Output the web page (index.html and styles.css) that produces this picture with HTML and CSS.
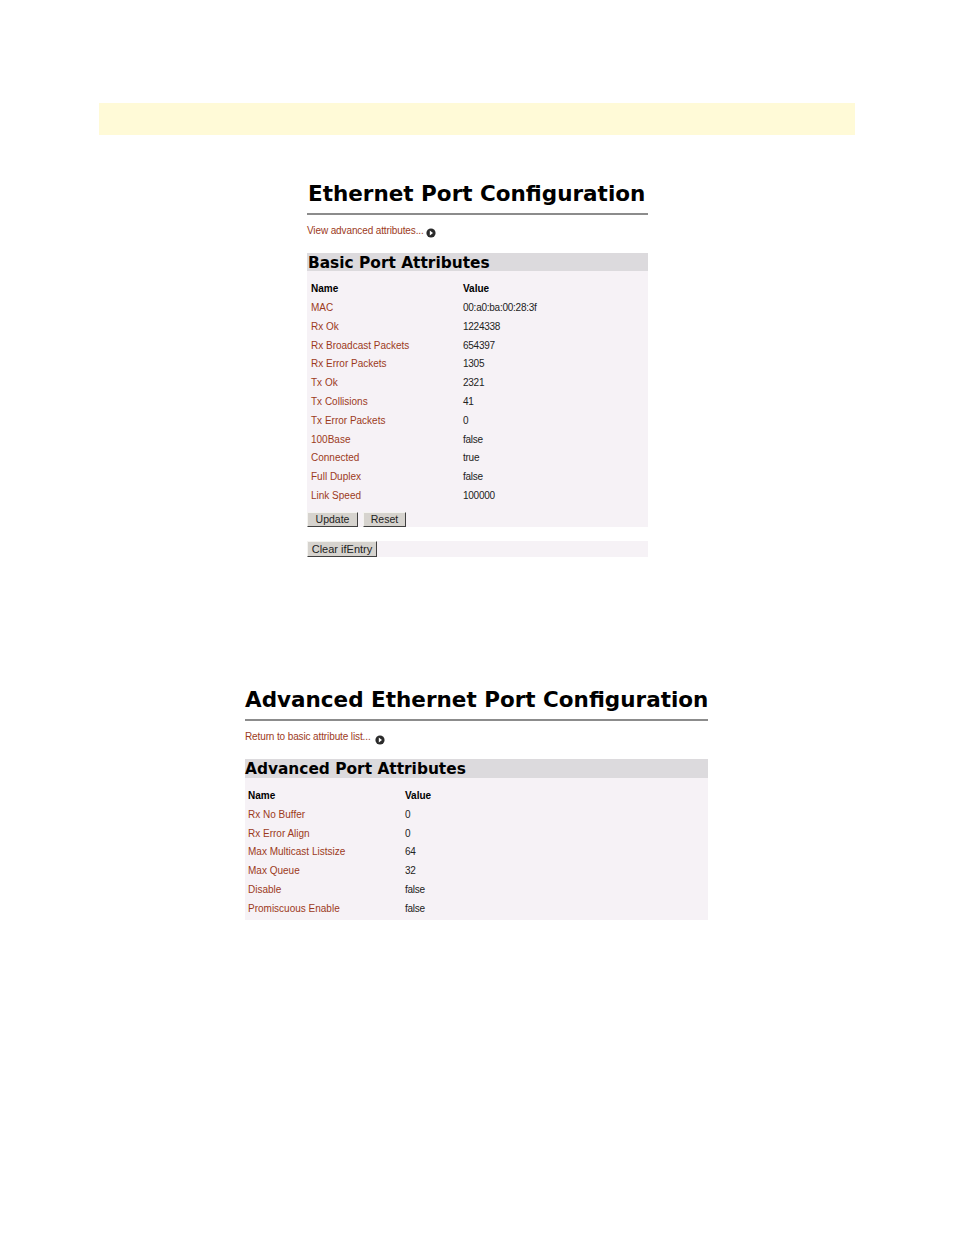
FILE: index.html
```html
<!DOCTYPE html>
<html lang="en">
<head>
    <meta charset="UTF-8">
    <title>Ethernet Port Configuration</title>
    <link rel="stylesheet" href="styles.css">
</head>
<body>
    <div class="note-bar"></div>

    <section class="panel panel-basic">
        <h1>Ethernet Port Configuration</h1>
        <p class="more"><a href="#">View advanced attributes...</a>
            <svg class="arrow" viewBox="0 0 10 10"><circle cx="5" cy="5" r="4.6" fill="#2b2b2b"/><path d="M3.8 2.6 7 5 3.8 7.4z" fill="#fff"/></svg>
        </p>
        <h2>Basic Port Attributes</h2>
        <div class="attrs">
            <table>
                <tr><th>Name</th><th>Value</th></tr>
                <tr><td><a href="#">MAC</a></td><td>00:a0:ba:00:28:3f</td></tr>
                <tr><td><a href="#">Rx Ok</a></td><td>1224338</td></tr>
                <tr><td><a href="#">Rx Broadcast Packets</a></td><td>654397</td></tr>
                <tr><td><a href="#">Rx Error Packets</a></td><td>1305</td></tr>
                <tr><td><a href="#">Tx Ok</a></td><td>2321</td></tr>
                <tr><td><a href="#">Tx Collisions</a></td><td>41</td></tr>
                <tr><td><a href="#">Tx Error Packets</a></td><td>0</td></tr>
                <tr><td><a href="#">100Base</a></td><td>false</td></tr>
                <tr><td><a href="#">Connected</a></td><td>true</td></tr>
                <tr><td><a href="#">Full Duplex</a></td><td>false</td></tr>
                <tr><td><a href="#">Link Speed</a></td><td>100000</td></tr>
            </table>
            <div class="buttons">
                <button class="btn-update">Update</button>
                <button class="btn-reset">Reset</button>
            </div>
        </div>
        <div class="clear-row"><button class="btn-clear">Clear ifEntry</button></div>
    </section>

    <section class="panel panel-advanced">
        <h1>Advanced Ethernet Port Configuration</h1>
        <p class="more"><a href="#">Return to basic attribute list...</a>
            <svg class="arrow" viewBox="0 0 10 10"><circle cx="5" cy="5" r="4.6" fill="#2b2b2b"/><path d="M3.8 2.6 7 5 3.8 7.4z" fill="#fff"/></svg>
        </p>
        <h2>Advanced Port Attributes</h2>
        <div class="attrs">
            <table>
                <tr><th>Name</th><th>Value</th></tr>
                <tr><td><a href="#">Rx No Buffer</a></td><td>0</td></tr>
                <tr><td><a href="#">Rx Error Align</a></td><td>0</td></tr>
                <tr><td><a href="#">Max Multicast Listsize</a></td><td>64</td></tr>
                <tr><td><a href="#">Max Queue</a></td><td>32</td></tr>
                <tr><td><a href="#">Disable</a></td><td>false</td></tr>
                <tr><td><a href="#">Promiscuous Enable</a></td><td>false</td></tr>
            </table>
        </div>
    </section>
</body>
</html>
```

FILE: styles.css
```css
body {
    margin: 0;
    padding-top: 103px;
    background: #fff;
    font-family: "Liberation Sans", Arial, sans-serif;
    color: #222;
}

a {
    color: #9c3a1c;
    text-decoration: none;
}

.note-bar {
    height: 32px;
    margin: 0 99px;
    background: #fffad7;
}

.panel-basic {
    width: 341px;
    margin: 44px 0 0 307px;
}

.panel-advanced {
    width: 463px;
    margin: 128px 0 0 245px;
}

h1 {
    margin: 0;
    padding-bottom: 5px;
    border-bottom: 2px solid #8c8c8c;
    font-family: "DejaVu Sans", Verdana, sans-serif;
    font-size: 21.5px;
    line-height: 29px;
    font-weight: bold;
    color: #000;
    white-space: nowrap;
}

.panel-basic h1,
.panel-basic h2 {
    padding-left: 1px;
}

.more {
    margin: 0;
    height: 38px;
    padding-top: 9px;
    box-sizing: border-box;
    font-size: 10px;
    letter-spacing: -0.12px;
    line-height: 14px;
}

.arrow {
    width: 10px;
    height: 10px;
    vertical-align: -4px;
}

.panel-advanced .arrow {
    margin-left: 2px;
    vertical-align: -5px;
}

h2 {
    margin: 0;
    height: 18px;
    background: #dcdadd;
    font-family: "DejaVu Sans", Verdana, sans-serif;
    font-size: 15.4px;
    line-height: 20px;
    font-weight: bold;
    color: #000;
    white-space: nowrap;
}

.panel-advanced h2 {
    height: 19px;
    line-height: 20px;
}

.attrs {
    background: #f6f2f6;
    padding-top: 8.3px;
}

.panel-advanced .attrs {
    padding-top: 8.3px;
    padding-bottom: 2.7px;
}

table {
    border-collapse: collapse;
    font-size: 10px;
}

th, td {
    height: 18.8px;
    padding: 0 0 0 4px;
    text-align: left;
    font-weight: normal;
}

td + td {
    letter-spacing: -0.25px;
}

th {
    font-weight: bold;
    color: #000;
}

tr > :first-child {
    width: 148px;
}

.panel-advanced tr > :first-child {
    width: 153px;
}

.panel-advanced table {
    margin-left: -1px;
}

.buttons {
    height: 22px;
    padding-top: 7px;
    box-sizing: border-box;
    display: flex;
    gap: 5px;
}

button {
    margin: 0;
    padding: 0;
    height: 15px;
    border: 1px solid;
    border-color: #f4f3f0 #404040 #404040 #f4f3f0;
    background: #d6d3ce;
    font-family: inherit;
    font-size: 10.5px;
    color: #222;
}

.btn-update { width: 51px; }
.btn-reset { width: 43px; }
.btn-clear { width: 70px; height: 16px; font-size: 11px; }

.clear-row {
    display: flex;
    margin-top: 14px;
    height: 16px;
    background: #f6f2f6;
}
```
